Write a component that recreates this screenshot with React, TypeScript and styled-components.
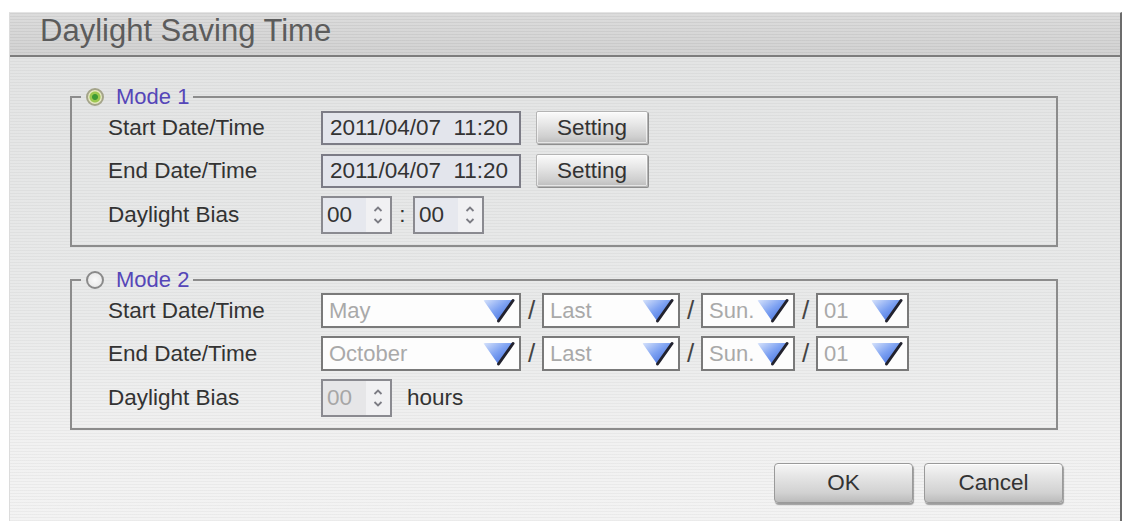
import React from 'react';
import styled, { createGlobalStyle } from 'styled-components';

const GlobalStyle = createGlobalStyle`
  html, body {
    margin: 0;
    padding: 0;
    background: #ffffff;
  }
  body {
    font-family: "Liberation Sans", Arial, sans-serif;
  }
`;

const Dialog = styled.div`
  box-sizing: border-box;
  margin: 12px 0 0 9px;
  width: 1113px;
  height: 509px;
  border-left: 1px solid #dcdcdc;
  border-right: 2px solid #6c6c6c;
  border-top: 1px solid #e4e4e4;
  background:
    repeating-linear-gradient(to bottom, rgba(0, 0, 0, 0.035) 0 1px, transparent 1px 3px),
    linear-gradient(to bottom, #e2e3e3, #e9eaea 60%, #f1f1f1 85%, #f3f3f3);
  overflow: hidden;
`;

const TitleBar = styled.div`
  box-sizing: border-box;
  height: 44px;
  padding: 2px 0 0 30px;
  border-bottom: 2px solid #7c7c7c;
  background:
    repeating-linear-gradient(to bottom, rgba(0, 0, 0, 0.05) 0 1px, transparent 1px 3px),
    linear-gradient(to bottom, #dcdcdc, #d2d2d2);
  color: #5c5c5c;
  font-size: 31px;
  line-height: 31px;
`;

const Body = styled.div`
  padding: 0 62px 0 60px;
`;

const Group = styled.fieldset<{ $top: number }>`
  margin: ${(p) => p.$top}px 0 0 0;
  padding: 3px 0 11px 9px;
  border: 2px solid #8c8c8c;
  min-width: 0;
`;

const Legend = styled.legend`
  box-sizing: border-box;
  height: 20px;
  padding: 0 4px 0 5px;
  line-height: 20px;
`;

const LegendInner = styled.span`
  display: inline-flex;
  align-items: center;
  gap: 12px;
  height: 20px;
  line-height: 20px;
  font-size: 22px;
  color: #5546b8;
  vertical-align: top;
`;

const Radio = styled.span<{ $checked?: boolean }>`
  box-sizing: border-box;
  display: inline-block;
  width: 18px;
  height: 18px;
  border-radius: 50%;
  border: 2px solid ${(p) => (p.$checked ? '#a4a48a' : '#8a8a8a')};
  background: ${(p) =>
    p.$checked
      ? 'radial-gradient(circle, #3c9a34 0 2.5px, #9cc850 3.5px 5px, #e6e8c0 6px)'
      : 'radial-gradient(circle, #fafafa, #e4e4e4)'};
`;

const Rows = styled.div`
  display: flex;
  flex-direction: column;
  gap: 8px;
  padding-left: 27px;
`;

const Row = styled.div<{ $tall?: boolean }>`
  display: flex;
  align-items: center;
  height: ${(p) => (p.$tall ? 38 : 35)}px;
`;

const Label = styled.span`
  width: 213px;
  flex: none;
  font-size: 22.5px;
  color: #333333;
`;

const DateField = styled.div`
  box-sizing: border-box;
  display: flex;
  align-items: center;
  width: 200px;
  height: 34px;
  padding-left: 7px;
  border: 2px solid #7c7c86;
  background: #e3e5ec;
  font-size: 22.5px;
  color: #333333;
  white-space: pre;
`;

const SettingButton = styled.div`
  box-sizing: border-box;
  display: flex;
  align-items: center;
  justify-content: center;
  margin-left: 15px;
  width: 112px;
  height: 33px;
  border: 1px solid #b4b4b4;
  border-radius: 2px;
  background: linear-gradient(to bottom, #fbfbfb, #e6e6e6 40%, #cfcfcf 80%, #bdbdbd);
  box-shadow: 1px 1px 0 #8e8e8e, inset 0 0 0 1px rgba(255, 255, 255, 0.6);
  font-size: 22.5px;
  color: #333333;
`;

const Spinner = styled.div<{ $disabled?: boolean }>`
  box-sizing: border-box;
  display: flex;
  width: 71px;
  height: 38px;
  border: 2px solid #8a8a90;
  background: ${(p) => (p.$disabled ? '#e6e6e8' : '#e6e8ee')};
`;

const SpinValue = styled.span<{ $disabled?: boolean }>`
  flex: 1;
  display: flex;
  align-items: center;
  padding-left: 4px;
  font-size: 22.5px;
  color: ${(p) => (p.$disabled ? '#a6a6a6' : '#333333')};
`;

const SpinArrows = styled.span`
  width: 24px;
  display: flex;
  flex-direction: column;
  align-items: center;
  justify-content: center;
  gap: 6px;
  background: #f1f1f3;
`;

const Colon = styled.span`
  width: 21px;
  text-align: center;
  font-size: 22.5px;
  color: #333333;
`;

const Unit = styled.span`
  margin-left: 15px;
  font-size: 22.5px;
  color: #333333;
`;

const Select = styled.div<{ $w: number }>`
  box-sizing: border-box;
  display: flex;
  align-items: center;
  justify-content: space-between;
  width: ${(p) => p.$w}px;
  height: 35px;
  padding: 0 4px 0 6px;
  border: 2px solid #7a7a7a;
  background: #fdfdfd;
  font-size: 22px;
  color: #a9a9a9;
`;

const Slash = styled.span`
  width: 21px;
  text-align: center;
  font-size: 26px;
  color: #444444;
`;

const ButtonRow = styled.div`
  display: flex;
  justify-content: flex-end;
  gap: 11px;
  margin: 33px -5px 0 0;
`;

const DialogButton = styled.div`
  box-sizing: border-box;
  display: flex;
  align-items: center;
  justify-content: center;
  width: 139px;
  height: 40px;
  border: 1px solid #9a9a9a;
  border-radius: 4px;
  background: linear-gradient(to bottom, #f6f6f6, #e4e4e4 35%, #d2d2d2 75%, #bcbcbc);
  box-shadow: 1px 2px 1px rgba(0, 0, 0, 0.35), inset 0 1px 0 #ffffff;
  font-size: 22.5px;
  color: #333333;
`;

const Chevrons = () => (
  <>
    <svg width="10" height="6" viewBox="0 0 10 6">
      <polyline points="1.5,5 5,1.5 8.5,5" fill="none" stroke="#7c7c84" strokeWidth="1.8" />
    </svg>
    <svg width="10" height="6" viewBox="0 0 10 6">
      <polyline points="1.5,1 5,4.5 8.5,1" fill="none" stroke="#7c7c84" strokeWidth="1.8" />
    </svg>
  </>
);

const DropArrow = () => (
  <svg width="33" height="25" viewBox="0 0 33 25">
    <defs>
      <linearGradient id="dropFill" x1="0" y1="0" x2="1" y2="1">
        <stop offset="0" stopColor="#d6e2fb" />
        <stop offset="0.45" stopColor="#7ea2f2" />
        <stop offset="1" stopColor="#3160d8" />
      </linearGradient>
    </defs>
    <path d="M2 3 Q1 2 3 2 L31 2 L16 23 Z" fill="url(#dropFill)" />
    <line x1="31" y1="2.5" x2="16.5" y2="23" stroke="#22222e" strokeWidth="3" strokeLinecap="round" />
  </svg>
);

const SpinBox = ({ value, disabled }: { value: string; disabled?: boolean }) => (
  <Spinner $disabled={disabled}>
    <SpinValue $disabled={disabled}>{value}</SpinValue>
    <SpinArrows>
      <Chevrons />
    </SpinArrows>
  </Spinner>
);

const Drop = ({ value, w }: { value: string; w: number }) => (
  <Select $w={w}>
    <span>{value}</span>
    <DropArrow />
  </Select>
);

const SelectRow = ({ label, month }: { label: string; month: string }) => (
  <Row>
    <Label>{label}</Label>
    <Drop value={month} w={200} />
    <Slash>/</Slash>
    <Drop value="Last" w={138} />
    <Slash>/</Slash>
    <Drop value="Sun." w={94} />
    <Slash>/</Slash>
    <Drop value="01" w={93} />
  </Row>
);

const App = () => {
  return (
    <>
      <GlobalStyle />
      <Dialog>
        <TitleBar>Daylight Saving Time</TitleBar>
        <Body>
          <Group $top={30}>
            <Legend>
              <LegendInner>
                <Radio $checked />
                Mode 1
              </LegendInner>
            </Legend>
            <Rows>
              <Row>
                <Label>Start Date/Time</Label>
                <DateField>2011/04/07  11:20</DateField>
                <SettingButton>Setting</SettingButton>
              </Row>
              <Row>
                <Label>End Date/Time</Label>
                <DateField>2011/04/07  11:20</DateField>
                <SettingButton>Setting</SettingButton>
              </Row>
              <Row $tall>
                <Label>Daylight Bias</Label>
                <SpinBox value="00" />
                <Colon>:</Colon>
                <SpinBox value="00" />
              </Row>
            </Rows>
          </Group>
          <Group $top={23}>
            <Legend>
              <LegendInner>
                <Radio />
                Mode 2
              </LegendInner>
            </Legend>
            <Rows>
              <SelectRow label="Start Date/Time" month="May" />
              <SelectRow label="End Date/Time" month="October" />
              <Row $tall>
                <Label>Daylight Bias</Label>
                <SpinBox value="00" disabled />
                <Unit>hours</Unit>
              </Row>
            </Rows>
          </Group>
          <ButtonRow>
            <DialogButton>OK</DialogButton>
            <DialogButton>Cancel</DialogButton>
          </ButtonRow>
        </Body>
      </Dialog>
    </>
  );
};

export default App;
